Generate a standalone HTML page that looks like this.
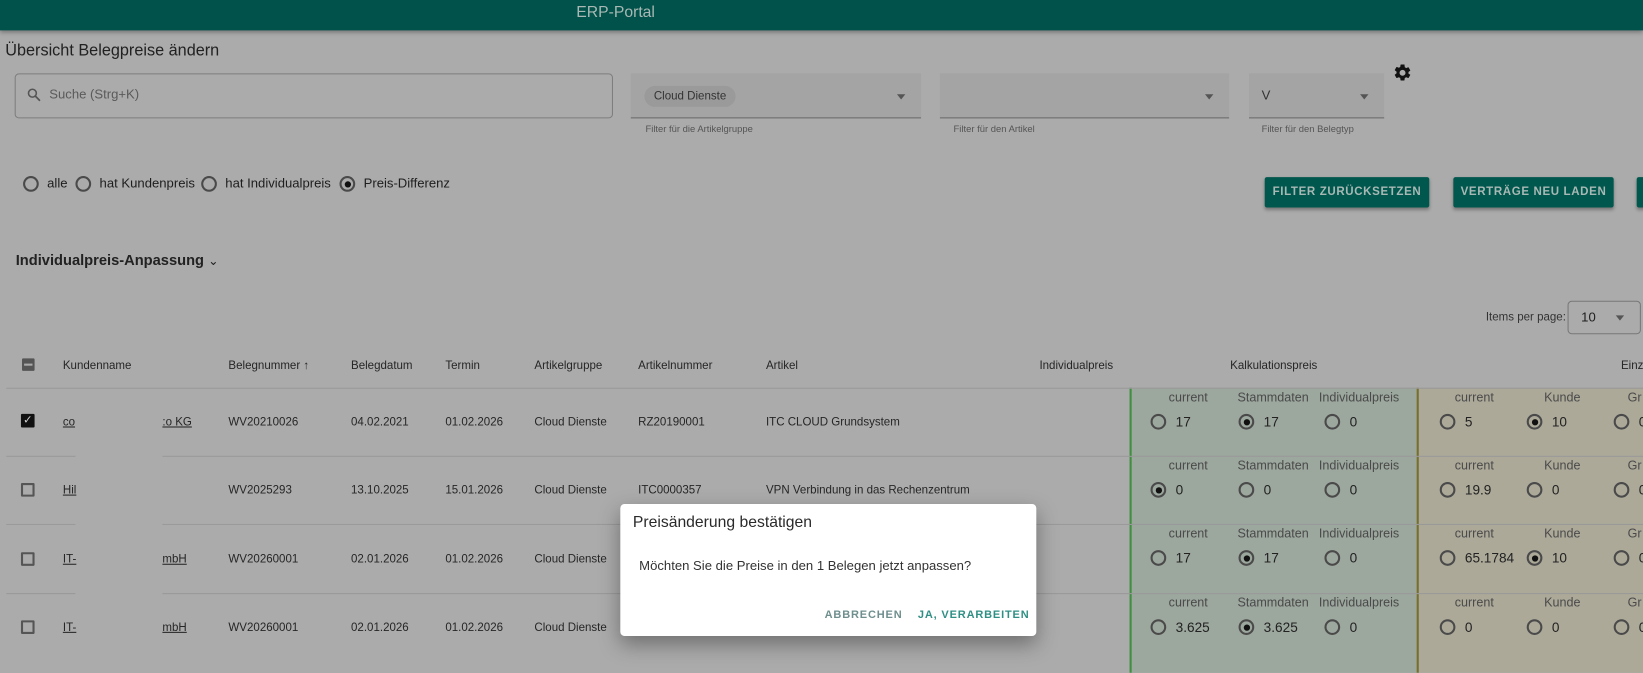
<!DOCTYPE html>
<html><head><meta charset="utf-8"><style>
*{box-sizing:border-box;margin:0;padding:0}
html,body{width:1643px;height:642px;overflow:hidden;background:#ababab}
body{font-family:"Liberation Sans",Arial,sans-serif;color:#1e1e1e}
#w{position:absolute;left:0;top:0;width:1568px;height:613px;transform:scale(1.047832);transform-origin:0 0}
.a{position:absolute;white-space:nowrap}
.t{font-size:11px;color:#262626}
.hd{font-size:11px;color:#262626}
.r{position:absolute;width:15px;height:15px;border:2px solid #4a4a4a;border-radius:50%}
.r.c::after{content:"";position:absolute;left:2.5px;top:2.5px;width:6px;height:6px;border-radius:50%;background:#111}
.line{position:absolute;height:1px;background:#999}
.lab{position:absolute;font-size:12px;color:#4a4a4a;text-align:center;white-space:nowrap}
.val{position:absolute;font-size:13px;color:#222;white-space:nowrap}
.btn{position:absolute;height:29px;background:#00574d;color:#a8b9b5;font-size:11px;font-weight:bold;letter-spacing:0.6px;line-height:29px;text-align:center;border-radius:2px;box-shadow:0 2px 3px rgba(0,0,0,.3)}
u{text-decoration:underline}
</style></head><body><div id="w">
<div class="a" style="left:0;top:0;width:1568px;height:29px;background:#00524a;box-shadow:0 2px 4px rgba(0,0,0,.3)"></div>
<div class="a" style="left:550px;top:3px;font-size:15px;color:#a9b8b4">ERP-Portal</div>
<div class="a" style="left:5px;top:40px;font-size:15.5px;color:#222">Übersicht Belegpreise ändern</div>
<div class="a" style="left:14px;top:70px;width:571px;height:43px;border:1px solid #7e7e7e;border-radius:4px"></div>
<svg class="a" style="left:25px;top:83px" width="15" height="15" viewBox="0 0 24 24"><circle cx="9.5" cy="9.5" r="6" fill="none" stroke="#555" stroke-width="2.4"/><path d="M14 14l7 7" stroke="#555" stroke-width="2.6"/></svg>
<div class="a" style="left:47px;top:83px;font-size:12.5px;color:#5a5a5a">Suche (Strg+K)</div>

<div class="a" style="left:602px;top:70px;width:277px;height:43px;background:#a4a4a4;border-bottom:1px solid #6a6a6a"></div>
<div class="a" style="left:615px;top:82px;height:20px;padding:0 9px;border-radius:10px;background:#9a9a9a;font-size:11px;line-height:20px;color:#333">Cloud Dienste</div>
<div class="a" style="left:856px;top:90px;border:4px solid transparent;border-top:5px solid #555"></div>
<div class="a" style="left:616px;top:118px;font-size:9px;color:#555">Filter für die Artikelgruppe</div>
<div class="a" style="left:897px;top:70px;width:276px;height:43px;background:#a4a4a4;border-bottom:1px solid #6a6a6a"></div>
<div class="a" style="left:1150px;top:90px;border:4px solid transparent;border-top:5px solid #555"></div>
<div class="a" style="left:910px;top:118px;font-size:9px;color:#555">Filter für den Artikel</div>
<div class="a" style="left:1192px;top:70px;width:129px;height:43px;background:#a4a4a4;border-bottom:1px solid #6a6a6a"></div>
<div class="a" style="left:1204px;top:84px;font-size:12.5px;color:#333">V</div>
<div class="a" style="left:1298px;top:90px;border:4px solid transparent;border-top:5px solid #555"></div>
<div class="a" style="left:1204px;top:118px;font-size:9px;color:#555">Filter für den Belegtyp</div>
<svg class="a" style="left:1329px;top:60px" width="19" height="19" viewBox="0 0 24 24"><path fill="#111" d="M19.14 12.94c.04-.3.06-.61.06-.94s-.02-.64-.07-.94l2.030-1.58a.49.49 0 0 0 .12-.61l-1.92-3.32a.49.49 0 0 0-.59-.22l-2.39.96a7 7 0 0 0-1.62-.94l-.36-2.54A.48.48 0 0 0 13.92 2h-3.84a.48.48 0 0 0-.48.41l-.36 2.54c-.59.24-1.13.57-1.62.94l-2.39-.96a.49.49 0 0 0-.59.22L2.72 8.47a.47.47 0 0 0 .12.61l2.03 1.58c-.05.3-.09.63-.09.94s.02.64.07.94l-2.03 1.58a.49.49 0 0 0-.12.61l1.92 3.32c.12.22.37.29.59.22l2.39-.96c.5.38 1.030.7 1.62.94l.36 2.54c.05.24.24.41.48.41h3.84c.24 0 .44-.17.47-.41l.36-2.54c.59-.24 1.13-.56 1.62-.94l2.39.96c.22.08.47 0 .59-.22l1.92-3.32a.47.47 0 0 0-.12-.61zM12 15.6A3.6 3.6 0 1 1 12 8.4a3.6 3.6 0 0 1 0 7.2z"/></svg>

<div class="r" style="left:22px;top:168px"></div><div class="a" style="left:45px;top:168px;font-size:12.5px">alle</div>
<div class="r" style="left:72px;top:168px"></div><div class="a" style="left:95px;top:168px;font-size:12.5px">hat Kundenpreis</div>
<div class="r" style="left:192px;top:168px"></div><div class="a" style="left:215px;top:168px;font-size:12.5px">hat Individualpreis</div>
<div class="r c" style="left:324px;top:168px"></div><div class="a" style="left:347px;top:168px;font-size:12.5px">Preis-Differenz</div>

<div class="btn" style="left:1207px;top:169px;width:157px">FILTER ZURÜCKSETZEN</div>
<div class="btn" style="left:1387px;top:169px;width:153px">VERTRÄGE NEU LADEN</div>
<div class="btn" style="left:1562px;top:169px;width:90px"></div>

<div class="a" style="left:15px;top:240px;font-size:14px;font-weight:bold;color:#222">Individualpreis-Anpassung <span style="font-weight:normal;font-size:12px">&#8964;</span></div>

<div class="a" style="left:1418px;top:297px;font-size:11px;color:#333">Items per page:</div>
<div class="a" style="left:1496px;top:287px;width:70px;height:32px;border:1px solid #777;border-radius:4px"></div>
<div class="a" style="left:1509px;top:296px;font-size:12.5px">10</div>
<div class="a" style="left:1542px;top:301px;border:4px solid transparent;border-top:5px solid #555"></div>

<div class="a" style="left:1078px;top:370px;width:274px;height:272px;background:#9ca79e;border-left:2px solid #3f8f3f"></div>
<div class="a" style="left:1352px;top:370px;width:291px;height:272px;background:#aca999;border-left:2px solid #76702c"></div>

<div class="a" style="left:21px;top:342px;width:12px;height:12px;background:#555;border-radius:1px"><div style="margin:5px 2px;height:2px;background:#aaa"></div></div>
<div class="a hd" style="left:60px;top:343px">Kundenname</div>
<div class="a hd" style="left:218px;top:343px">Belegnummer <span style="font-weight:bold">&#8593;</span></div>
<div class="a hd" style="left:335px;top:343px">Belegdatum</div>
<div class="a hd" style="left:425px;top:343px">Termin</div>
<div class="a hd" style="left:510px;top:343px">Artikelgruppe</div>
<div class="a hd" style="left:609px;top:343px">Artikelnummer</div>
<div class="a hd" style="left:731px;top:343px">Artikel</div>
<div class="a hd" style="left:992px;top:343px">Individualpreis</div>
<div class="a hd" style="left:1174px;top:343px">Kalkulationspreis</div>
<div class="a hd" style="left:1547px;top:343px">Einz</div>
<div class="line" style="left:6px;top:370px;width:1637px"></div>

<div class="line" style="left:6px;top:435px;width:66px"></div><div class="line" style="left:155px;top:435px;width:1488px"></div>
<div class="line" style="left:6px;top:500px;width:66px"></div><div class="line" style="left:155px;top:500px;width:1488px"></div>
<div class="line" style="left:6px;top:566px;width:66px"></div><div class="line" style="left:155px;top:566px;width:1488px"></div>

<div class="a" style="left:20px;top:395px;width:13px;height:13px;background:#111;border-radius:1px;color:#ccc;font-size:11px;line-height:13px;text-align:center">&#10003;</div>
<div class="a" style="left:20px;top:461px;width:13px;height:13px;border:2px solid #555;border-radius:1px"></div>
<div class="a" style="left:20px;top:527px;width:13px;height:13px;border:2px solid #555;border-radius:1px"></div>
<div class="a" style="left:20px;top:592px;width:13px;height:13px;border:2px solid #555;border-radius:1px"></div>

<div class="a t" style="left:60px;top:397px"><u>co</u></div><div class="a t" style="left:155px;top:397px"><u>:o KG</u></div>
<div class="a t" style="left:60px;top:462px"><u>Hil</u></div>
<div class="a t" style="left:60px;top:528px"><u>IT-</u></div><div class="a t" style="left:155px;top:528px"><u>mbH</u></div>
<div class="a t" style="left:60px;top:593px"><u>IT-</u></div><div class="a t" style="left:155px;top:593px"><u>mbH</u></div>

<div class="a t" style="left:218px;top:397px">WV20210026</div><div class="a t" style="left:335px;top:397px">04.02.2021</div><div class="a t" style="left:425px;top:397px">01.02.2026</div><div class="a t" style="left:510px;top:397px">Cloud Dienste</div><div class="a t" style="left:609px;top:397px">RZ20190001</div><div class="a t" style="left:731px;top:397px">ITC CLOUD Grundsystem</div>
<div class="a t" style="left:218px;top:462px">WV2025293</div><div class="a t" style="left:335px;top:462px">13.10.2025</div><div class="a t" style="left:425px;top:462px">15.01.2026</div><div class="a t" style="left:510px;top:462px">Cloud Dienste</div><div class="a t" style="left:609px;top:462px">ITC0000357</div><div class="a t" style="left:731px;top:462px">VPN Verbindung in das Rechenzentrum</div>
<div class="a t" style="left:218px;top:528px">WV20260001</div><div class="a t" style="left:335px;top:528px">02.01.2026</div><div class="a t" style="left:425px;top:528px">01.02.2026</div><div class="a t" style="left:510px;top:528px">Cloud Dienste</div>
<div class="a t" style="left:218px;top:593px">WV20260001</div><div class="a t" style="left:335px;top:593px">02.01.2026</div><div class="a t" style="left:425px;top:593px">01.02.2026</div><div class="a t" style="left:510px;top:593px">Cloud Dienste</div>

<div id="pc"></div>
<script>
var rows=[[372,[0,1,0],["17","17","0"],[0,1],["5","10"]],[437,[1,0,0],["0","0","0"],[0,0],["19.9","0"]],[502,[0,1,0],["17","17","0"],[0,1],["65.1784","10"]],[568,[0,1,0],["3.625","3.625","0"],[0,0],["0","0"]]];
var h="";var gx=[1098,1182,1264],lx=[1134,1215,1297],ln=["current","Stammdaten","Individualpreis"];
var yx=[1374,1457,1540],ylx=[1407,1491,1560],yln=["current","Kunde","Gr"];
rows.forEach(function(r){var y=r[0];
for(var i=0;i<3;i++){h+='<div class="lab" style="left:'+(lx[i]-45)+'px;width:90px;top:'+y+'px">'+ln[i]+'</div>';
h+='<div class="r'+(r[1][i]?' c':'')+'" style="left:'+gx[i]+'px;top:'+(y+23)+'px"></div>';
h+='<div class="val" style="left:'+(gx[i]+24)+'px;top:'+(y+23)+'px">'+r[2][i]+'</div>';
h+='<div class="lab" style="left:'+(ylx[i]-45)+'px;width:90px;top:'+y+'px">'+yln[i]+'</div>';
h+='<div class="r'+(i<2&&r[3][i]?' c':'')+'" style="left:'+yx[i]+'px;top:'+(y+23)+'px"></div>';
h+='<div class="val" style="left:'+(yx[i]+24)+'px;top:'+(y+23)+'px">'+(i<2?r[4][i]:'0')+'</div>';}
});
document.getElementById('pc').innerHTML=h;
</script>

<div class="a" style="left:592px;top:481px;width:397px;height:126px;background:#fff;border-radius:4px;box-shadow:0 8px 20px rgba(0,0,0,.35)"></div>
<div class="a" style="left:604px;top:490px;font-size:15px;color:#2a2a2a">Preisänderung bestätigen</div>
<div class="a" style="left:610px;top:533px;font-size:12.5px;color:#333">Möchten Sie die Preise in den 1 Belegen jetzt anpassen?</div>
<div class="a" style="left:787px;top:581px;font-size:10.5px;font-weight:bold;letter-spacing:0.8px;color:#6f8e8e">ABBRECHEN</div>
<div class="a" style="left:876px;top:581px;font-size:10.5px;font-weight:bold;letter-spacing:0.8px;color:#2f8f84">JA, VERARBEITEN</div>
</div></body></html>
